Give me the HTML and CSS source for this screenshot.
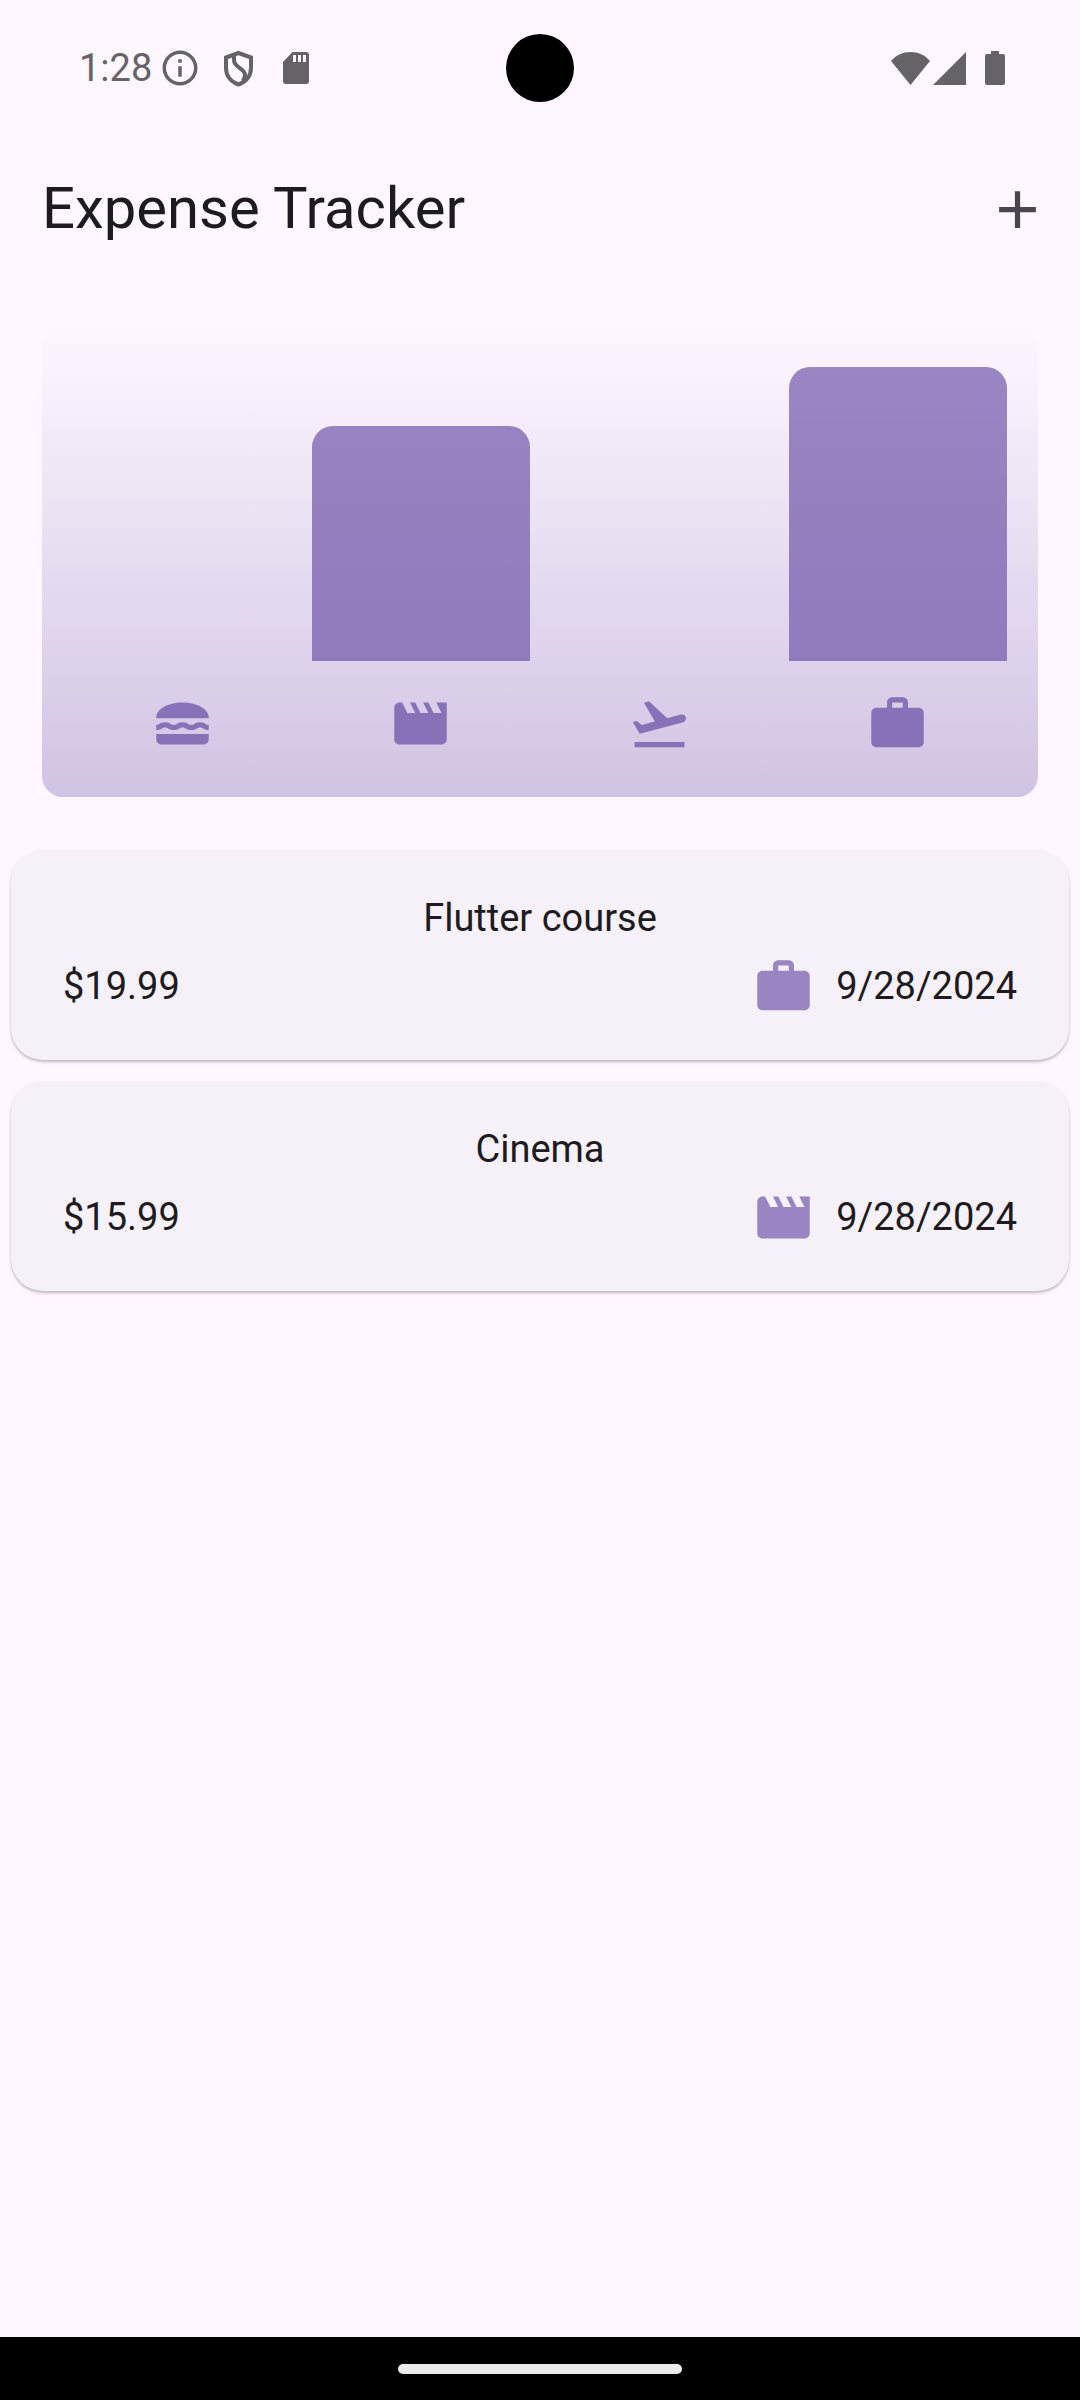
FILE: index.html
```html
<!DOCTYPE html>
<html lang="en">
<head>
<meta charset="utf-8">
<meta name="viewport" content="width=device-width, initial-scale=1">
<title>Expense Tracker</title>
<link rel="stylesheet" href="styles.css">
</head>
<body>
<svg class="sprite" aria-hidden="true">
  <symbol id="lunch" viewBox="0 0 24 24"><path d="M22 10c.32-3.28-4.28-6-9.99-6S1.7 6.72 2.02 10H22zM5.35 13.5c.55 0 .78.14 1.15.36.45.27 1.07.64 2.18.64s1.73-.37 2.18-.64c.37-.23.59-.36 1.15-.36.55 0 .78.14 1.15.36.45.27 1.07.64 2.18.64s1.73-.37 2.18-.64c.37-.23.59-.36 1.15-.36.55 0 .78.14 1.15.36.45.27 1.07.63 2.17.64v-1.98s0 0-.01 0c-.54 0-.78-.14-1.15-.36-.45-.27-1.07-.64-2.18-.64s-1.73.37-2.18.64c-.37.23-.6.36-1.15.36s-.78-.14-1.15-.36c-.45-.27-1.07-.64-2.18-.64s-1.73.37-2.18.64c-.37.23-.59.36-1.15.36-.55 0-.78-.14-1.15-.36-.45-.27-1.07-.64-2.18-.64s-1.73.37-2.18.64c-.37.23-.59.36-1.15.36v2c1.11 0 1.73-.37 2.21-.64.36-.23.59-.36 1.14-.36zM2 16v2c0 1.1.9 2 2 2h16c1.1 0 2-.9 2-2v-2H2z"/></symbol>
  <symbol id="movie" viewBox="0 0 24 24"><path d="M18 4l2 4h-3l-2-4h-2l2 4h-3l-2-4H8l2 4H7L5 4H4c-1.1 0-1.99.9-1.99 2L2 18c0 1.1.9 2 2 2h16c1.1 0 2-.9 2-2V4h-4z"/></symbol>
  <symbol id="flight" viewBox="0 0 24 24"><path d="M2.5 19h19v2h-19zm19.57-9.36c-.21-.8-1.04-1.28-1.84-1.06L14.92 10l-6.9-6.43-1.93.51 4.14 7.17-4.97 1.33-1.97-1.54-1.45.39 1.82 3.16.77 1.33 1.6-.43 5.31-1.42 4.35-1.16L21 11.49c.81-.23 1.28-1.05 1.07-1.85z"/></symbol>
  <symbol id="work" viewBox="0 0 24 24"><path d="M20 6h-4V4c0-1.11-.89-2-2-2h-4c-1.11 0-2 .89-2 2v2H4c-1.11 0-1.99.89-1.99 2L2 19c0 1.11.89 2 2 2h16c1.11 0 2-.89 2-2V8c0-1.11-.89-2-2-2zm-6 0h-4V4h4v2z"/></symbol>
</svg>

<div class="status">
  <div class="status-left">
    <span class="time">1:28</span>
    <svg class="notice" viewBox="0 0 24 24"><path d="M11 7h2v2h-2zm0 4h2v6h-2zm1-9C6.480 2 2 6.480 2 12s4.480 10 10 10 10-4.480 10-10S17.520 2 12 2zm0 18c-4.410 0-8-3.590-8-8s3.590-8 8-8 8 3.590 8 8-3.590 8-8 8z"/></svg>
    <svg class="notice" viewBox="0 0 42 42"><path class="line" d="M21.500 6L34 10.500V21c0 8-5 14-12.500 16.500C14 35 9 29 9 21V10.500zM17 8v5c0 8 11 8 11 15 0 2-1 4-2 6"/></svg>
    <svg class="notice" viewBox="0 0 42 42"><path fill-rule="evenodd" d="M17.500 5H31a3 3 0 0 1 3 3v26a3 3 0 0 1-3 3H11a3 3 0 0 1-3-3V15zM18 8v7h3V8zM23 8v7h3V8zM28 8v7h3V8z"/></svg>
  </div>
  <div class="camera"></div>
  <div class="status-right">
    <svg class="wifi" viewBox="0 0 39 33"><path d="M19.500 33L0 9C5 3 12 0 19.500 0S34 3 39 9z"/></svg>
    <svg class="signal" viewBox="0 0 33 33"><path d="M33 0v33H0z"/></svg>
    <svg class="battery" viewBox="0 0 20 34"><path d="M6 0h8v3h4a2 2 0 0 1 2 2v27a2 2 0 0 1-2 2H2a2 2 0 0 1-2-2V5a2 2 0 0 1 2-2h4z"/></svg>
  </div>
</div>

<header class="appbar">
  <h1>Expense Tracker</h1>
  <button class="add" type="button" aria-label="Add expense">
    <svg class="icon" viewBox="0 0 24 24"><path d="M19 13h-6v6h-2v-6H5v-2h6V5h2v6h6v2z"/></svg>
  </button>
</header>

<main>
  <section class="chart" aria-label="Expenses by category">
    <div class="column"><div class="track"><div class="bar" style="height: 0%"></div></div><svg class="icon"><use href="#lunch"/></svg></div>
    <div class="column"><div class="track"><div class="bar" style="height: 80%"></div></div><svg class="icon"><use href="#movie"/></svg></div>
    <div class="column"><div class="track"><div class="bar" style="height: 0%"></div></div><svg class="icon"><use href="#flight"/></svg></div>
    <div class="column"><div class="track"><div class="bar" style="height: 100%"></div></div><svg class="icon"><use href="#work"/></svg></div>
  </section>

  <ul class="expenses">
    <li class="card">
      <h2>Flutter course</h2>
      <div class="details">
        <span>$19.99</span>
        <span class="date"><svg class="icon"><use href="#work"/></svg><span>9/28/2024</span></span>
      </div>
    </li>
    <li class="card">
      <h2>Cinema</h2>
      <div class="details">
        <span>$15.99</span>
        <span class="date"><svg class="icon"><use href="#movie"/></svg><span>9/28/2024</span></span>
      </div>
    </li>
  </ul>
</main>

<div class="navbar"><div class="handle"></div></div>
</body>
</html>
```

FILE: styles.css
```css
* {
  box-sizing: border-box;
}

body {
  --accent: rgba(101, 76, 163, 0.65);
  margin: 0;
  min-height: 100vh;
  display: flex;
  flex-direction: column;
  background: #fef7ff;
  color: #1d1b20;
  font-family: Roboto, sans-serif;
  font-size: 38px;
  line-height: 53px;
}

h1,
h2 {
  margin: 0;
  font-weight: 400;
}

.sprite {
  display: none;
}

.icon {
  display: block;
  width: 63px;
  height: 63px;
  flex: none;
  fill: var(--accent);
}

/* Status bar */
.status {
  position: relative;
  display: flex;
  align-items: center;
  justify-content: space-between;
  height: 136px;
  padding: 0 75px 0 79px;
  color: #666368;
  fill: #666368;
}

.status-left,
.status-right {
  display: flex;
  align-items: center;
}

.status-left {
  gap: 16px;
}

.time {
  margin-right: -9px;
}

.notice {
  width: 42px;
  height: 42px;
}

.line {
  fill: none;
  stroke: #666368;
  stroke-width: 4;
}

.camera {
  position: absolute;
  top: 34px;
  left: calc(50% - 34px);
  width: 68px;
  height: 68px;
  border-radius: 50%;
  background: #000;
}

.wifi {
  width: 39px;
  height: 33px;
}

.signal {
  width: 33px;
  height: 33px;
  margin: 0 19px 0 3px;
}

.battery {
  width: 20px;
  height: 34px;
}

/* App bar */
.appbar {
  display: flex;
  align-items: center;
  justify-content: space-between;
  height: 147px;
  padding-left: 42px;
}

.appbar h1 {
  padding-bottom: 4px;
  font-size: 58px;
  line-height: 74px;
}

.add {
  display: grid;
  place-items: center;
  width: 126px;
  height: 126px;
  padding: 0;
  border: 0;
  background: none;
}

.add .icon {
  fill: #49454f;
}

main {
  flex: 1;
}

/* Chart */
.chart {
  display: grid;
  grid-template-columns: repeat(4, 1fr);
  margin: 42px;
  padding: 42px 21px;
  border-radius: 21px;
  background: linear-gradient(to top, rgba(101, 76, 163, 0.3), rgba(101, 76, 163, 0));
}

.column {
  display: flex;
  flex-direction: column;
  align-items: center;
  gap: 31px;
}

.column .icon {
  fill: rgba(101, 76, 163, 0.7);
}

.track {
  display: flex;
  align-items: flex-end;
  align-self: stretch;
  height: 294px;
  padding: 0 10px;
}

.bar {
  flex: 1;
  border-radius: 21px 21px 0 0;
  background: var(--accent);
}

/* Expense list */
.expenses {
  display: flex;
  flex-direction: column;
  gap: 21px;
  margin: 0;
  padding: 11px;
  list-style: none;
}

.card {
  display: flex;
  flex-direction: column;
  gap: 10px;
  padding: 42px 52px;
  border-radius: 32px;
  background: #f6f1f9;
  box-shadow: 0 2px 3px rgba(0, 0, 0, 0.26);
}

.card h2 {
  font-size: 38px;
  text-align: center;
}

.details,
.date {
  display: flex;
  align-items: center;
}

.details {
  justify-content: space-between;
}

.date {
  gap: 21px;
}

/* Gesture navigation */
.navbar {
  display: grid;
  place-items: center;
  height: 63px;
  background: #000;
}

.handle {
  width: 284px;
  height: 10px;
  border-radius: 5px;
  background: #ececec;
}
```
